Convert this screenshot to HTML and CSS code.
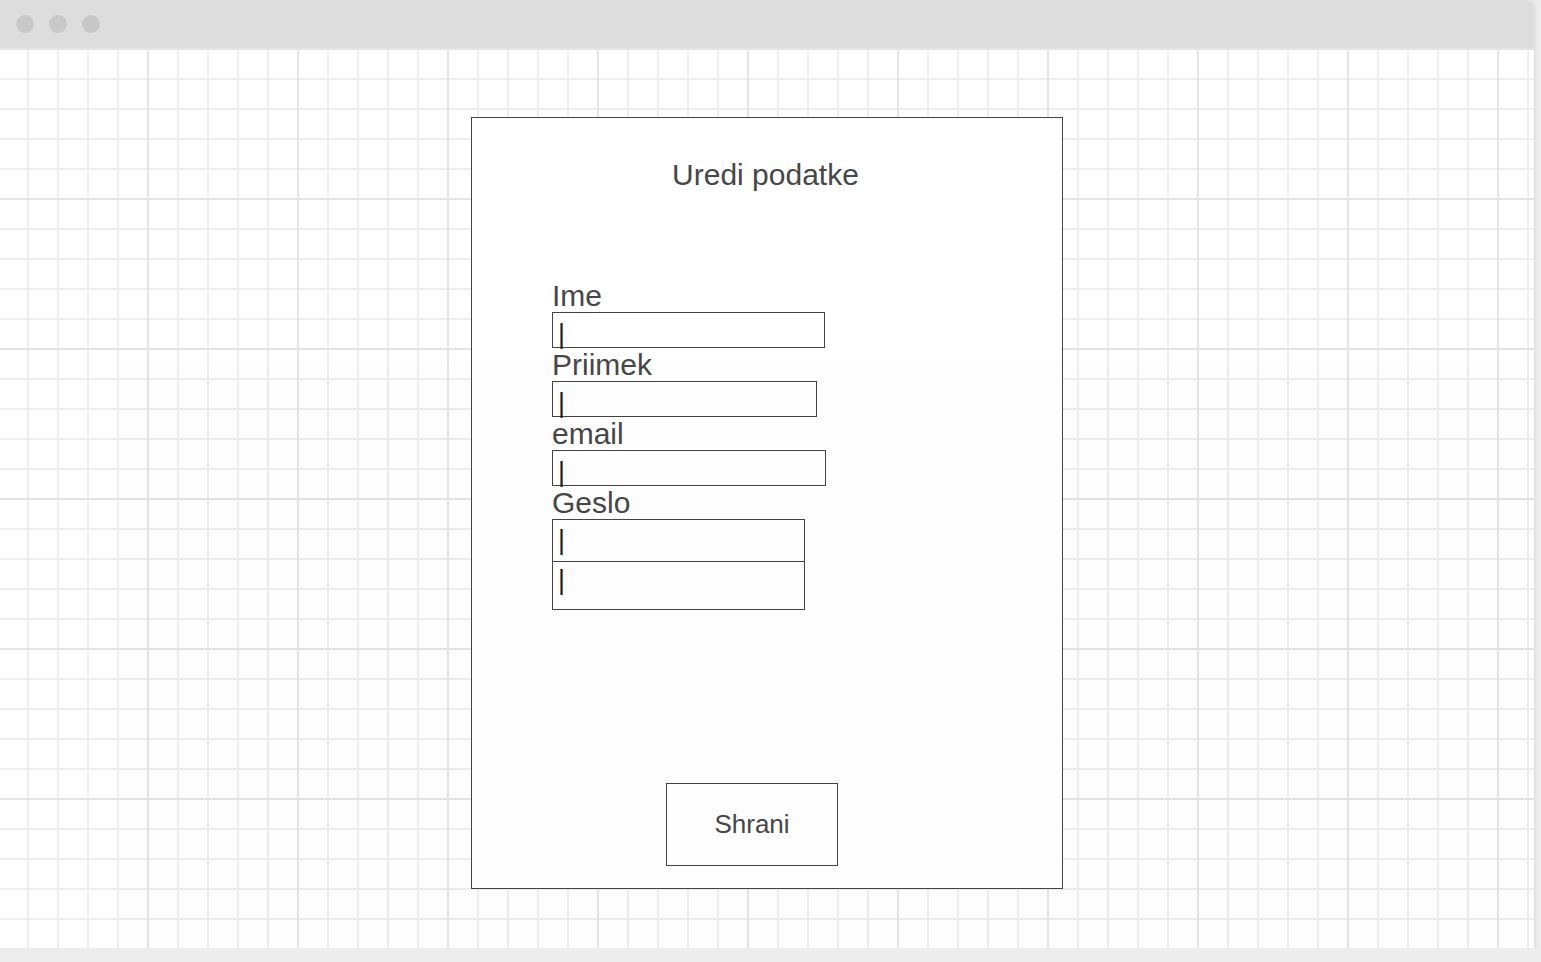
FILE: index.html
```html
<!DOCTYPE html>
<html lang="sl">
<head>
    <meta charset="UTF-8">
    <meta name="viewport" content="width=device-width, initial-scale=1.0">
    <title>Uredi podatke</title>
    <link rel="stylesheet" href="styles.css">
</head>
<body>
    <div class="window">
        <div class="titlebar">
            <span class="dot"></span>
            <span class="dot"></span>
            <span class="dot"></span>
        </div>
        <div class="canvas">
            <div class="panel">
                <h1 class="panel-title">Uredi podatke</h1>
                <form class="form">
                    <label class="field-label">Ime</label>
                    <div class="field field-ime"><span class="caret">|</span></div>
                    <label class="field-label">Priimek</label>
                    <div class="field field-priimek"><span class="caret">|</span></div>
                    <label class="field-label">email</label>
                    <div class="field field-email"><span class="caret">|</span></div>
                    <label class="field-label">Geslo</label>
                    <div class="field field-geslo"><span class="caret">|</span></div>
                    <div class="field field-geslo2"><span class="caret">|</span></div>
                </form>
                <div class="save-btn">Shrani</div>
            </div>
            <!-- faint watermark layer over the canvas -->
            <div class="veil"></div>
        </div>
    </div>
</body>
</html>
```

FILE: styles.css
```css
body {
    margin: 0;
    padding: 0;
    background-color: #ededed;
    font-family: "Liberation Sans", Arial, sans-serif;
    color: #474747;
    overflow: hidden;
}
.window {
    width: 1534px;
    height: 948px;
    background-color: #fff;
    border-top-right-radius: 8px;
    box-shadow: 2px 0 3px rgba(0, 0, 0, 0.06);
}
.titlebar {
    height: 48px;
    background-color: #dddddd;
    border-top-right-radius: 8px;
    display: flex;
    align-items: center;
    gap: 15px;
    padding-left: 16px;
}
.dot {
    width: 18px;
    height: 18px;
    border-radius: 50%;
    background-color: #c8c8c8;
}
.canvas {
    position: relative;
    height: 900px;
    box-sizing: border-box;
    padding: 69px 0 0 471px;
    background-color: #fff;
    background-image:
        linear-gradient(to right, #e4e4e4 2px, transparent 2px),
        linear-gradient(to bottom, #e4e4e4 2px, transparent 2px),
        linear-gradient(to right, #eeeeee 2px, transparent 2px),
        linear-gradient(to bottom, #eeeeee 2px, transparent 2px);
    background-size: 150px 150px, 150px 150px, 30px 30px, 30px 30px;
    background-position: -3px 0, 0 0, -3px 0, 0 0;
}
.panel {
    width: 590px;
    height: 770px;
    border: 1px solid #444;
    background-color: #fff;
}
.panel-title {
    margin: 39px 0 0 0;
    font-size: 30px;
    line-height: 36px;
    font-weight: normal;
    text-align: center;
    padding-right: 3px;
}
.form {
    display: flex;
    flex-direction: column;
    align-items: flex-start;
    margin: 86px 0 0 80px;
}
.field-label {
    font-size: 30px;
    line-height: 33px;
}
.field {
    box-sizing: border-box;
    height: 36px;
    border: 1px solid #444;
    padding: 8px 0 0 5px;
    background-color: #fff;
}
.caret {
    display: block;
    font-size: 27px;
    line-height: 26px;
    color: #1e1e1e;
}
.field-ime {
    width: 273px;
}
.field-priimek {
    width: 265px;
}
.field-email {
    width: 274px;
}
.field-geslo {
    width: 253px;
    height: 43px;
    padding-top: 7px;
}
.field-geslo2 {
    width: 253px;
    height: 49px;
    margin-top: -1px;
    padding-top: 5px;
}
.save-btn {
    box-sizing: border-box;
    width: 172px;
    height: 83px;
    margin: 173px 0 0 194px;
    border: 1px solid #444;
    display: flex;
    align-items: center;
    justify-content: center;
    font-size: 26px;
}
.veil {
    position: absolute;
    left: 120px;
    top: 314px;
    right: 0;
    bottom: 0;
    background-color: rgba(0, 0, 0, 0.007);
    pointer-events: none;
}
```
